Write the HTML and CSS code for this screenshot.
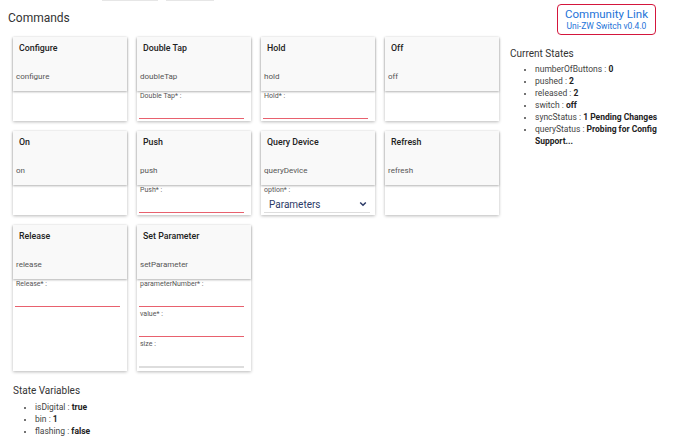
FILE: index.html
```html
<!DOCTYPE html>
<html>
<head>
<meta charset="utf-8">
<link rel="stylesheet" href="styles.css">
</head>
<body>
<div class="topbtns"><span class="tb tb1"></span><span class="tb tb2"></span></div>
<div class="page">
  <div class="left">
    <h2 class="title">Commands</h2>
    <div class="grid">
      <div class="card">
        <div class="head"><div class="name">Configure</div><div class="cmd">configure</div></div>
        <div class="body"></div>
      </div>
      <div class="card">
        <div class="head"><div class="name">Double Tap</div><div class="cmd">doubleTap</div></div>
        <div class="body"><div class="field"><div class="lbl">Double Tap* :</div><div class="line"></div></div></div>
      </div>
      <div class="card">
        <div class="head"><div class="name">Hold</div><div class="cmd">hold</div></div>
        <div class="body"><div class="field"><div class="lbl">Hold* :</div><div class="line"></div></div></div>
      </div>
      <div class="card">
        <div class="head"><div class="name">Off</div><div class="cmd">off</div></div>
        <div class="body"></div>
      </div>
      <div class="card">
        <div class="head"><div class="name">On</div><div class="cmd">on</div></div>
        <div class="body"></div>
      </div>
      <div class="card">
        <div class="head"><div class="name">Push</div><div class="cmd">push</div></div>
        <div class="body"><div class="field"><div class="lbl">Push* :</div><div class="line"></div></div></div>
      </div>
      <div class="card">
        <div class="head"><div class="name">Query Device</div><div class="cmd">queryDevice</div></div>
        <div class="body"><div class="field"><div class="lbl">option* :</div>
          <div class="select"><span>Parameters</span>
            <svg width="8" height="6" viewBox="0 0 8 6"><path d="M1.2 1.5 L4 4.3 L6.8 1.5" fill="none" stroke="#2b3a67" stroke-width="1.5"/></svg>
          </div></div></div>
      </div>
      <div class="card">
        <div class="head"><div class="name">Refresh</div><div class="cmd">refresh</div></div>
        <div class="body"></div>
      </div>
      <div class="card">
        <div class="head"><div class="name">Release</div><div class="cmd">release</div></div>
        <div class="body tall"><div class="field"><div class="lbl">Release* :</div><div class="line"></div></div></div>
      </div>
      <div class="card">
        <div class="head"><div class="name">Set Parameter</div><div class="cmd">setParameter</div></div>
        <div class="body tall">
          <div class="field"><div class="lbl">parameterNumber* :</div><div class="line"></div></div>
          <div class="field"><div class="lbl">value* :</div><div class="line"></div></div>
          <div class="field"><div class="lbl">size :</div><div class="line grey"></div></div>
        </div>
      </div>
    </div>
    <div class="vars">
      <h3 class="sub">State Variables</h3>
      <ul class="list">
        <li>isDigital : <b>true</b></li>
        <li>bin : <b>1</b></li>
        <li>flashing : <b>false</b></li>
      </ul>
    </div>
  </div>
  <div class="right">
    <div class="linkwrap">
      <div class="linkbox">
        <div class="l1">Community Link</div>
        <div class="l2">Uni-ZW Switch v0.4.0</div>
      </div>
    </div>
    <h3 class="sub states">Current States</h3>
    <ul class="list">
      <li>numberOfButtons : <b>0</b></li>
      <li>pushed : <b>2</b></li>
      <li>released : <b>2</b></li>
      <li>switch : <b>off</b></li>
      <li>syncStatus : <b>1 Pending Changes</b></li>
      <li>queryStatus : <b>Probing for Config Support...</b></li>
    </ul>
  </div>
</div>
</body>
</html>
```
FILE: styles.css
```css
* { box-sizing: border-box; }
body {
  margin: 0;
  background: #fff;
  font-family: Roboto, "Liberation Sans", sans-serif;
  color: #333;
  width: 690px;
  height: 444px;
  overflow: hidden;
}
.topbtns { height: 1px; display: flex; padding-left: 102px; gap: 8px; }
.tb { display: block; height: 1px; background: #e6e6e6; }
.tb1 { width: 56px; }
.tb2 { width: 48px; }
.page { display: flex; }
.left { width: 505px; }
.title {
  margin: 0;
  padding: 10px 0 0 8px;
  font-size: 12px;
  font-weight: 400;
  line-height: 15px;
  color: #333;
}
.grid {
  display: grid;
  grid-template-columns: repeat(4, 114px);
  column-gap: 10px;
  row-gap: 10px;
  padding: 11px 0 0 13px;
  align-items: start;
}
.card {
  background: #fff;
  box-shadow: 0 1px 3px rgba(0,0,0,0.28);
}
.head {
  background: #f9f9f9;
  height: 54px;
  box-shadow: 0 1px 2px rgba(0,0,0,0.3);
  position: relative;
  padding: 5px 0 0 0;
}
.name {
  font-size: 8.8px;
  font-weight: 500;
  color: #222;
  padding-left: 6px;
  line-height: 12px;
}
.cmd {
  font-size: 8px;
  color: #555;
  margin-top: 18px;
  padding-left: 3px;
  line-height: 10px;
}
.body {
  height: 30px;
  padding: 1px 7px 0 2px;
}
.body.tall { height: 92px; }
.field { height: 30px; }
.lbl {
  font-size: 7px;
  color: #555;
  line-height: 9px;
  padding-left: 1px;
}
.line {
  margin-top: 17px;
  height: 1px;
  background: #e8616e;
}
.line.grey { background: #ddd; height: 2px; }
.select {
  display: flex;
  align-items: center;
  justify-content: space-between;
  padding: 1px 3px 0 5px;
  border-bottom: 1px solid #ddd;
  font-size: 10px;
  color: #2b3a67;
  height: 18px;
  margin-left: 1px;
  margin-right: -2px;
}
.vars { padding: 13px 0 0 13px; }
.sub {
  margin: 0;
  font-size: 10px;
  font-weight: 400;
  color: #333;
  line-height: 13px;
}
.list {
  margin: 4px 0 0;
  padding-left: 22px;
  font-size: 8.5px;
  line-height: 12px;
  color: #444;
}
.list li::marker { font-size: 8px; }
.list b { font-weight: 700; color: #222; }
.right { width: 185px; }
.linkwrap { display: flex; padding: 3px 0 0 52px; }
.linkbox {
  border: 1.5px solid #d4163c;
  border-radius: 4px;
  width: 99px;
  height: 31px;
  text-align: center;
  padding-top: 2px;
  color: #1d73d8;
}
.l1 { font-size: 11.5px; line-height: 14px; }
.l2 { font-size: 8.5px; line-height: 11px; }
.states { margin-top: 12px; padding-left: 5px; }
.right .list { padding-left: 30px; width: 180px; margin-top: 3px; }
```
